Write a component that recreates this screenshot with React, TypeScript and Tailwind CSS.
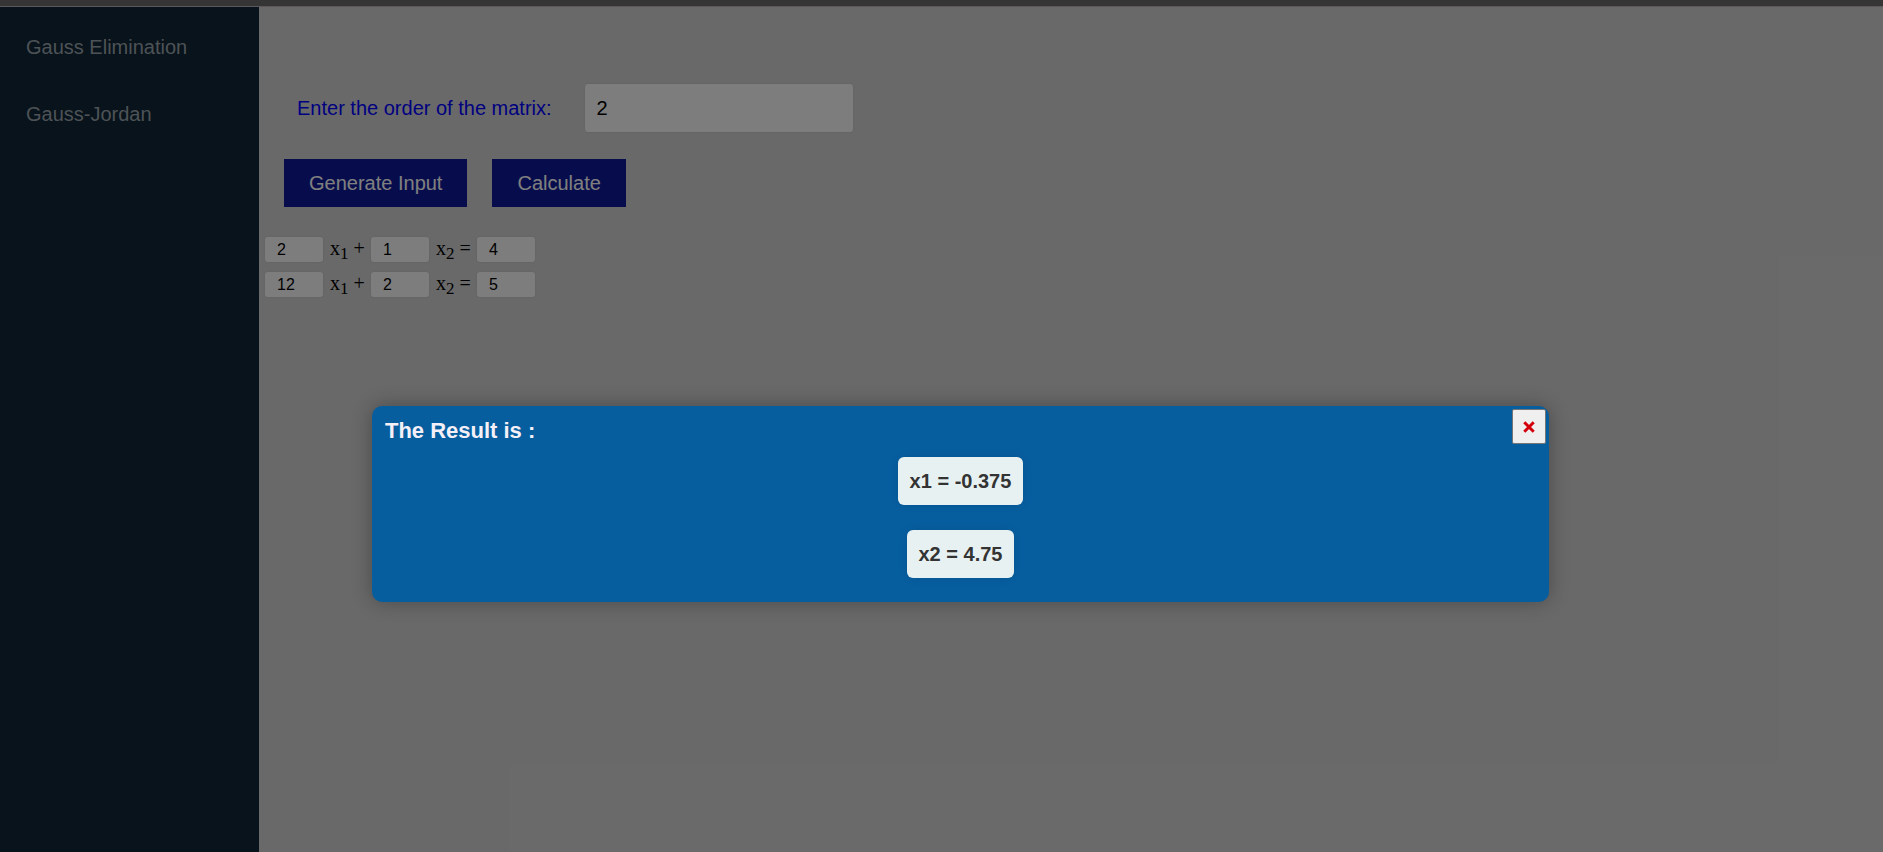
import { useState } from "react";

const methods = ["Gauss Elimination", "Gauss-Jordan"];

const rows = [
  { a: "2", b: "1", c: "4" },
  { a: "12", b: "2", c: "5" },
];

const results = ["x1 = -0.375", "x2 = 4.75"];

function Cell({ value, label }: { value: string; label: string }) {
  return (
    <input
      aria-label={label}
      defaultValue={value}
      className="h-[25px] w-[58px] rounded-[3px] bg-[#fafafa] px-3 text-base text-black shadow-[0_0_3px_rgba(0,0,0,0.08)] outline-none font-['Liberation_Sans',Arial,sans-serif]"
    />
  );
}

function Term({ index, sign }: { index: number; sign: string }) {
  return (
    <span className="w-[48px] pb-[3px] pl-[7px] text-xl leading-6 whitespace-nowrap font-['Liberation_Serif','Times_New_Roman',serif]">
      x<sub className="text-[17px]">{index}</sub> {sign}
    </span>
  );
}

export default function App() {
  const [open, setOpen] = useState(true);

  return (
    <div className="relative flex min-h-screen flex-col bg-[#d3d3d3] text-xl text-black font-['Liberation_Sans',Arial,sans-serif]">
      <div className="h-[7px] border-b border-[#b8b0b8] bg-[#6c6a6a]" />
      <div className="flex grow">
        <nav className="flex w-[259px] shrink-0 flex-col gap-[27px] bg-[#112636] px-[26px] pt-5 leading-10 text-[#9aa4ac]">
          {methods.map((m) => (
            <a key={m} href="#" className="whitespace-nowrap">
              {m}
            </a>
          ))}
        </nav>
        <main className="grow pt-[77px]">
          <div className="flex items-center gap-[33px] pl-[38px]">
            <label htmlFor="order" className="whitespace-nowrap text-[#0000ff]">
              Enter the order of the matrix:
            </label>
            <input
              id="order"
              defaultValue="2"
              className="h-12 w-[268px] rounded-[3px] bg-[#fafafa] px-3 shadow-[0_0_3px_rgba(0,0,0,0.08)] outline-none"
            />
          </div>
          <div className="mt-[27px] flex gap-[25px] pl-[25px]">
            <button type="button" className="h-12 bg-[#0e1a98] px-[25px] text-white">
              Generate Input
            </button>
            <button
              type="button"
              onClick={() => setOpen(true)}
              className="h-12 bg-[#0e1a98] px-[25px] text-white"
            >
              Calculate
            </button>
          </div>
          <div className="mt-[30px] flex flex-col gap-[10px] pl-[6px]">
            {rows.map((r, i) => (
              <div key={i} className="flex h-[25px] items-center">
                <Cell value={r.a} label={`Row ${i + 1}, x1`} />
                <Term index={1} sign="+" />
                <Cell value={r.b} label={`Row ${i + 1}, x2`} />
                <Term index={2} sign="=" />
                <Cell value={r.c} label={`Row ${i + 1}, constant`} />
              </div>
            ))}
          </div>
        </main>
      </div>

      {open && (
        <div className="absolute inset-0 flex items-center justify-center bg-black/50 pt-[156px] pl-[38px]">
          <section
            role="dialog"
            aria-labelledby="result-title"
            className="relative w-[63.8%] rounded-[10px] bg-[#075e9f] px-[13px] pt-[11px] pb-6 shadow-[0_0_20px_rgba(0,0,0,0.3)]"
          >
            <h2 id="result-title" className="text-[22px] leading-7 font-bold text-[#f5f0f8]">
              The Result is :
            </h2>
            <button
              type="button"
              aria-label="Close"
              onClick={() => setOpen(false)}
              className="absolute top-[3px] right-[3px] flex h-[35px] w-[34px] items-center justify-center rounded-[2px] border border-[#767676] bg-[#efefef]"
            >
              <svg viewBox="0 0 12 12" className="size-3" fill="none" stroke="#d3000c" strokeWidth="3">
                <path d="M1.3 1.3 10.7 10.7M10.7 1.3 1.3 10.7" />
              </svg>
            </button>
            <div className="mt-3 flex flex-col items-center gap-[25px]">
              {results.map((r) => (
                <p
                  key={r}
                  className="flex h-12 items-center rounded-[6px] bg-[#e8f1f2] px-3 font-bold text-[#333333] shadow-[0_0_8px_rgba(0,0,0,0.1)]"
                >
                  {r}
                </p>
              ))}
            </div>
          </section>
        </div>
      )}
    </div>
  );
}
